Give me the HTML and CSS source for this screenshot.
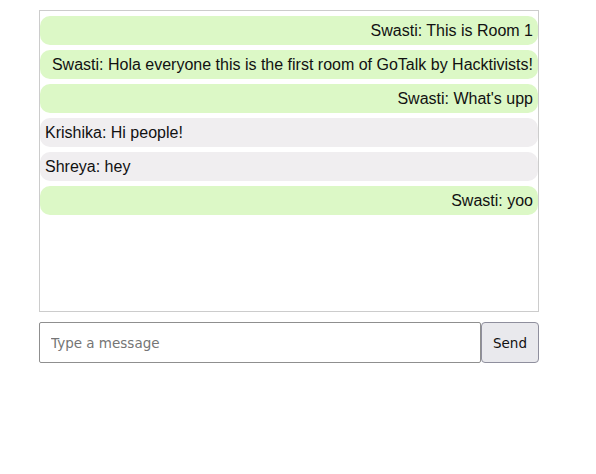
FILE: index.html
```html
<!DOCTYPE html>
<html>
<head>
<meta charset="utf-8">
<link rel="stylesheet" href="styles.css">
</head>
<body>
<div class="app">
  <div class="chat">
    <div class="msg mine">Swasti: This is Room 1</div>
    <div class="msg mine">Swasti: Hola everyone this is the first room of GoTalk by Hacktivists!</div>
    <div class="msg mine">Swasti: What's upp</div>
    <div class="msg other">Krishika: Hi people!</div>
    <div class="msg other">Shreya: hey</div>
    <div class="msg mine">Swasti: yoo</div>
  </div>
  <form class="composer">
    <input class="field" type="text" placeholder="Type a message">
    <button class="send" type="button">Send</button>
  </form>
</div>
</body>
</html>
```
FILE: styles.css
```css
html, body {
  margin: 0;
  padding: 0;
  background: #fff;
}
.app {
  padding: 10px 0 0 39px;
  width: 500px;
}
.chat {
  box-sizing: border-box;
  width: 500px;
  height: 302px;
  border: 1px solid #cccccc;
  padding: 5px 0;
  display: flex;
  flex-direction: column;
  gap: 5px;
  overflow-y: auto;
}
.msg {
  font-family: "Liberation Sans", Arial, sans-serif;
  font-size: 16px;
  line-height: 19px;
  padding: 5px;
  border-radius: 10px;
  color: #111;
}
.mine {
  background: #dcf8c6;
  text-align: right;
}
.other {
  background: #f0eef0;
  text-align: left;
}
.composer {
  margin: 10px 0 0;
  display: flex;
}
.field {
  box-sizing: border-box;
  width: 442px;
  height: 41px;
  padding: 0 11px;
  border: 1px solid #8f8f8f;
  border-radius: 2px;
  font-family: "DejaVu Sans", sans-serif;
  font-size: 13.5px;
  color: #222;
  outline: none;
}
.field::placeholder {
  color: #757575;
}
.send {
  box-sizing: border-box;
  width: 58px;
  height: 41px;
  border: 1px solid #8f8f9d;
  border-radius: 4px;
  background: #e9e9ed;
  font-family: "DejaVu Sans", sans-serif;
  font-size: 13.5px;
  color: #111;
  padding: 0;
}
```
